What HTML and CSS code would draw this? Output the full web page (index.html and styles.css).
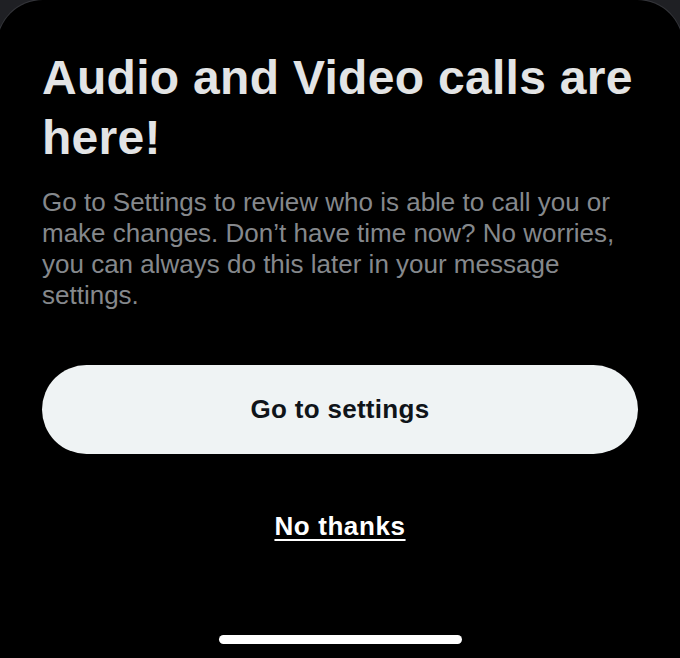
FILE: index.html
```html
<!DOCTYPE html>
<html lang="en">
<head>
  <meta charset="UTF-8" />
  <meta name="viewport" content="width=device-width, initial-scale=1.0"/>
  <title>Audio and Video calls</title>
  <link rel="stylesheet" href="styles.css">
</head>
<body>

<div class="sheet">
  <h1 class="title">Audio and Video calls are here!</h1>

  <p class="desc">Go to Settings to review who is able to call you or make changes. Don’t have time now? No worries, you can always do this later in your message settings.</p>

  <!-- primary action -->
  <button class="primary-button">Go to settings</button>

  <a class="skip-link" href="#">No thanks</a>

  <div class="home-bar"></div>
</div>

</body>
</html>
```

FILE: styles.css
```css
body {
  margin: 0;
  padding: 0;
  background: #1f2024;
  font-family: 'Liberation Sans', Arial, sans-serif;
  overflow: hidden;
}

.sheet {
  display: flex;
  flex-direction: column;
  box-sizing: border-box;
  height: 100vh;
  margin: 0 -3px;
  padding: 48px 45px 14px 45px;
  background: #000;
  border-radius: 46px 46px 0 0;
  box-shadow: 0 0 0 1px #34353a;
}

.title {
  margin: 0;
  font-size: 48px;
  line-height: 60px;
  font-weight: bold;
  letter-spacing: 0.3px;
  color: #e3e4e5;
}

.desc {
  margin: 19px 0 0 0;
  font-size: 26px;
  line-height: 31px;
  color: #85888c;
}

.primary-button {
  display: block;
  margin-top: 54px;
  height: 89px;
  border: none;
  border-radius: 45px;
  background: #eff3f4;
  color: #0f1419;
  font-family: inherit;
  font-size: 26px;
  font-weight: bold;
  letter-spacing: 0.3px;
  cursor: pointer;
}

.skip-link {
  align-self: center;
  margin-top: 57px;
  font-size: 26px;
  line-height: 31px;
  font-weight: bold;
  letter-spacing: 0.6px;
  color: #fff;
  text-decoration: underline;
  text-decoration-thickness: 2px;
  text-underline-offset: 4px;
}

.home-bar {
  align-self: center;
  margin-top: auto;
  width: 243px;
  height: 9px;
  border-radius: 5px;
  background: #fff;
}
```
